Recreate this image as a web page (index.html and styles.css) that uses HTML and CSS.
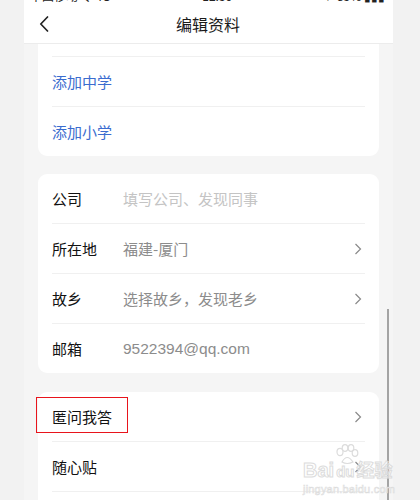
FILE: index.html
```html
<!DOCTYPE html>
<html lang="zh">
<head>
<meta charset="utf-8">
<link rel="stylesheet" href="styles.css">
</head>
<body>
<div class="page">
  <header class="header">
    <div class="status"><span class="status-l">中国移动 令 4G</span><span class="status-m">12:30</span><span class="status-r">✈ 85% ▮▮▮</span></div>
    <div class="nav">
      <svg class="back" width="10" height="16" viewBox="0 0 10 16"><path d="M8.5 1 L1.8 8 L8.5 15" fill="none" stroke="#222" stroke-width="1.7" stroke-linecap="round" stroke-linejoin="round"/></svg>
      <div class="title">编辑资料</div>
    </div>
  </header>

  <section class="card card-top">
    <div class="stub"></div>
    <div class="row"><span class="link">添加中学</span></div>
    <div class="row"><span class="link">添加小学</span></div>
  </section>

  <section class="card">
    <div class="row"><span class="label">公司</span><span class="value placeholder">填写公司、发现同事</span></div>
    <div class="row"><span class="label">所在地</span><span class="value">福建-厦门</span><svg class="chev" width="8" height="12" viewBox="0 0 8 12"><path d="M1.5 1 L6.5 6 L1.5 11" fill="none" stroke="#8a8a8a" stroke-width="1.2"/></svg></div>
    <div class="row"><span class="label">故乡</span><span class="value">选择故乡，发现老乡</span><svg class="chev" width="8" height="12" viewBox="0 0 8 12"><path d="M1.5 1 L6.5 6 L1.5 11" fill="none" stroke="#8a8a8a" stroke-width="1.2"/></svg></div>
    <div class="row"><span class="label">邮箱</span><span class="value email">9522394@qq.com</span></div>
  </section>

  <section class="card card-last">
    <div class="row"><span class="label">匿问我答</span><svg class="chev" width="8" height="12" viewBox="0 0 8 12"><path d="M1.5 1 L6.5 6 L1.5 11" fill="none" stroke="#8a8a8a" stroke-width="1.2"/></svg></div>
    <div class="row"><span class="label">随心贴</span><svg class="chev" width="8" height="12" viewBox="0 0 8 12"><path d="M1.5 1 L6.5 6 L1.5 11" fill="none" stroke="#8a8a8a" stroke-width="1.2"/></svg></div>
    <div class="row"></div>
  </section>
</div>

<div class="highlight"></div>
<div class="scrollbar"></div>
<div class="watermark">
  <svg class="paw" width="26" height="22" viewBox="0 0 26 22"><g fill="none" stroke="#dcdcdc" stroke-width="1.2"><ellipse cx="6" cy="8" rx="3" ry="3.6"/><ellipse cx="11" cy="4" rx="2.8" ry="3.4"/><ellipse cx="17" cy="4" rx="2.8" ry="3.4"/><ellipse cx="21" cy="9" rx="2.8" ry="3.4"/><path d="M8 18 Q13 9 19 18 Q13 21 8 18 Z"/></g></svg>
  <div class="wm-main"><span class="wm-bai">Bai</span><span class="wm-du">du</span><span class="wm-cn">经验</span></div>
  <div class="wm-url">jingyan.baidu.com</div>
</div>
</body>
</html>
```
FILE: styles.css
```css
* { box-sizing: border-box; }
html, body {
  margin: 0;
  padding: 0;
  background: #f2f2f2;
  font-family: "Noto Sans CJK SC", "Noto Sans", sans-serif;
}
body { width: 420px; height: 500px; overflow: hidden; position: relative; }
.page {
  margin-left: 24px;
  width: 369px;
  min-height: 500px;
  background: #f5f5f5;
}
.header {
  background: #fff;
  height: 44px;
  border-bottom: 1px solid #ececec;
}
.status {
  height: 4px;
  overflow: hidden;
  display: flex;
  justify-content: space-between;
  padding: 0 8px 0 6px;
  font-size: 12px;
  line-height: 12px;
  color: #222;
}
.status span { margin-top: -10px; display: block; }
.nav {
  position: relative;
  height: 39px;
  display: flex;
  align-items: center;
  justify-content: center;
}
.back { position: absolute; left: 15px; top: 12px; }
.title {
  font-size: 16px;
  color: #1a1a1a;
  line-height: 20px;
  margin-left: -1px;
}
.card {
  background: #fff;
  margin: 18px 14px 0;
  border-radius: 9px;
  padding: 0 14px;
}
.card-top {
  margin-top: 0;
  border-radius: 0 0 9px 9px;
}
.card-last { margin-top: 19px; }
.stub { height: 13px; border-bottom: 1px solid #f0f0f0; }
.row {
  height: 50px;
  display: flex;
  align-items: center;
  border-bottom: 1px solid #f0f0f0;
  font-size: 15px;
}
.card > .row:last-child { border-bottom: none; height: 49px; }
.link { color: #3b6ccf; }
.label { width: 71px; color: #111; flex: none; }
.value { color: #8c8c8c; flex: 1; }
.placeholder { color: #c4c4c4; }
.email { font-family: "Liberation Sans", Arial, sans-serif; font-size: 15.5px; color: #8c8c8c; }
.chev { margin-left: auto; margin-right: 3px; }
.highlight {
  position: absolute;
  left: 36px;
  top: 397px;
  width: 92px;
  height: 36px;
  border: 1.5px solid #e8141c;
}
.scrollbar {
  position: absolute;
  left: 387px;
  top: 309px;
  width: 2px;
  height: 191px;
  background: #a4a4a4;
}
.watermark {
  position: absolute;
  left: 303px;
  top: 444px;
  width: 90px;
  pointer-events: none;
}
.paw { position: absolute; left: 31px; top: 0; }
.wm-main {
  margin-top: 15px;
  font-family: "Liberation Sans", Arial, sans-serif;
  font-size: 20px;
  line-height: 20px;
  font-weight: bold;
  color: rgba(255,255,255,0.5);
  -webkit-text-stroke: 1px #dcdcdc;
  white-space: nowrap;
}
.wm-du { font-size: 15px; margin-left: 2px; }
.wm-cn { font-family: "Noto Sans CJK SC", sans-serif; font-size: 18px; margin-left: 2px; }
.wm-url {
  font-family: "Liberation Sans", Arial, sans-serif;
  font-size: 11px;
  color: rgba(255,255,255,0.5);
  -webkit-text-stroke: 0.6px #dcdcdc;
  margin-top: 1px;
  letter-spacing: 0.2px;
}
```
